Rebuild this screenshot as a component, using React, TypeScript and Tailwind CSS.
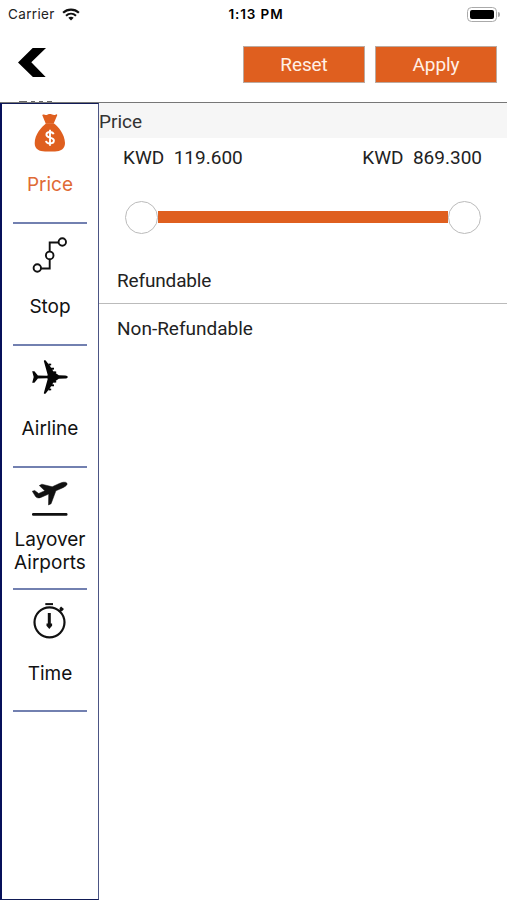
import React, { useState } from "react";

interface FilterTab {
  name: string;
  icon: React.ReactNode;
}

const MoneyBagIcon = () => (
  <svg width="34" height="38" viewBox="0 0 34 38">
    <path
      d="M9.4 1.6C9 .7 9.8.2 10.8.6c1.6.7 2.6.5 4-.1 1.500-.6 2.700-.6 4.200 0 1.500.6 2.600.7 4-.1.9-.4 1.500.2 1.100 1.200L20.600 9.800h-7.800L9.400 1.600z"
      fill="#df5f1f"
    />
    <path
      d="M13 9.600h8c4 3 10.800 10.500 11 19.400.1 6-4.500 8.400-10 8.400H12c-5.500 0-10.400-2.200-10.300-8.200C1.800 20.500 8.500 13 13 9.600z"
      fill="#df5f1f"
    />
    <path
      d="M20.600 20.300c-.4-1.600-1.800-2.300-3.600-2.300-2.100 0-3.600 1-3.600 2.700 0 4 7.500 1.800 7.500 5.900 0 1.800-1.700 2.900-3.900 2.900-2.200 0-3.700-.9-4-2.700M17 15.700v16"
      fill="none"
      stroke="#fff"
      strokeWidth="1.900"
    />
  </svg>
);

const StopIcon = () => (
  <svg width="36" height="38" viewBox="0 0 36 38" fill="none" stroke="#111" strokeWidth="1.900">
    <path d="M9 31.500h8.700V23M17.700 14.700V5.500H26" />
    <circle cx="5.300" cy="31" r="3.700" />
    <circle cx="17.700" cy="18.400" r="3.800" />
    <circle cx="30.300" cy="5" r="3.700" />
  </svg>
);

const AirlineIcon = () => (
  <svg width="36" height="36" viewBox="0 0 36 36">
    <g fill="#050505">
      <path d="M.2 12.200h2.200l3.500 4.300 9.200.2L19 13.800h4.200l3.600 2.400 6.400.2c1.500.1 2.600.9 2.600 1.600s-1.100 1.500-2.600 1.600l-6.400.2-3.600 2.400H19l-3.900-2.900-9.200.2-3.500 4.300H.2L1.700 18z" />
      <path d="M16 17L11.900 2.300C11.600 1 12.900.8 13.700 1.600L18 7l5.500 9v4L18 29l-4.300 5.400c-.8.8-2.100.6-1.800-.7L16 19z" />
      <path d="M16.600 4.600l2.600.1v1.600l-2.600.5zM19 8.700l3 .1v1.600l-3 .5zM21.300 12.300l2.900.1V14l-2.900.5zM16.600 31.400l2.600-.1v-1.600l-2.600-.5zM19 27.300l3-.1v-1.600l-3-.5zM21.300 23.700l2.900-.1V22l-2.900-.5z" />
    </g>
  </svg>
);

const LayoverIcon = () => (
  <svg width="36" height="37" viewBox="0 -1 36 37">
    <path
      d="M.3 9.200l2.400-.7 4 3 6.100-2.800L7.300 3.600l2.600-1.400 10.300 2.600L27.300 1.500c3-1.400 6.500-2 7.600-.3.900 1.500-1.200 3.200-4.500 4.700l-6.500 2.900-4.800 12.900-2.600 1.300.2-10.900-7.800 3.300c-2.300.9-4.200.6-5.300-.8z"
      fill="#111"
      stroke="#111"
      strokeWidth=".5"
    />
    <rect x="0" y="31" width="35.500" height="2.800" rx="1.200" fill="#111" />
  </svg>
);

const TimeIcon = () => (
  <svg width="36" height="39" viewBox="0 0 36 39" fill="none" stroke="#111">
    <path d="M13.300 1.100H21" strokeWidth="2" />
    <circle cx="17.500" cy="19.300" r="15" strokeWidth="2.200" />
    <path d="M27.200 8.800l2.700-3M28.200 4.500l2.900 2.500" strokeWidth="2.600" />
    <path d="M17.300 10v12" strokeWidth="3" />
    <path d="M14.500 20.500h5.600v2.300l-2.800 3.300-2.800-3.300z" fill="#111" stroke="none" />
  </svg>
);

const tabs: FilterTab[] = [
  { name: "Price", icon: <MoneyBagIcon /> },
  { name: "Stop", icon: <StopIcon /> },
  { name: "Airline", icon: <AirlineIcon /> },
  { name: "Layover Airports", icon: <LayoverIcon /> },
  { name: "Time", icon: <TimeIcon /> },
];

const StatusBar = () => (
  <div className="grid h-7 grid-cols-3 items-center pl-2 pr-[7px] font-['Inter',sans-serif] text-[13.5px] text-[#222]">
    <div className="flex items-center gap-[7px]">
      <span className="tracking-[0.35px]">Carrier</span>
      <svg width="18" height="13" viewBox="0 0 18 13">
        <path d="M1.100 4.700C5.600.5 12.400.5 16.900 4.700" fill="none" stroke="#111" strokeWidth="2.200" />
        <path d="M4 7.700c2.900-2.600 7.100-2.600 10 0" fill="none" stroke="#111" strokeWidth="2.100" />
        <path d="M6.300 9.800c1.600-1.300 3.800-1.300 5.400 0L9 12.500z" fill="#111" />
      </svg>
    </div>
    <span className="pl-1 text-center font-semibold tracking-[0.9px] text-black">1:13 PM</span>
    <div className="flex items-center justify-end gap-px">
      <div className="h-[15px] w-[30px] rounded-[4.500px] border border-[#aaa] p-[2px]">
        <div className="h-full rounded-[2px] bg-black" />
      </div>
      <div className="h-[5px] w-[2px] rounded-r-full bg-[#aaa]" />
    </div>
  </div>
);

const App: React.FC = () => {
  const [active, setActive] = useState("Price");

  return (
    <div className="flex h-[900px] w-[507px] flex-col overflow-hidden bg-white font-['Roboto',sans-serif] text-[#222]">
      <StatusBar />
      <header className="relative flex h-[75px] items-start justify-between border-b border-[#777] pl-[18px] pr-[10px] pt-[18px]">
        <button className="pt-[1px]" aria-label="Back">
          <svg width="28" height="31" viewBox="0 0 28 31">
            <path d="M14.700 1H28L13.300 15.200 27.700 30H14.900L0 15.500z" fill="#000" />
          </svg>
        </button>
        <div className="flex gap-[10px] text-[19px] text-[#fff0e6]">
          <button className="h-[37px] w-[122px] border border-[#bbaaa0] bg-[#df5f1f] pt-[2px] tracking-[-0.1px]">
            Reset
          </button>
          <button className="h-[37px] w-[122px] border border-[#bbaaa0] bg-[#df5f1f] pt-[2px] tracking-[-0.1px]">
            Apply
          </button>
        </div>
        {/* tips of the label scrolled under the header */}
        <div className="absolute bottom-0 left-[19px] flex gap-1">
          <span className="h-px w-2 bg-[#666]" />
          <span className="h-px w-1 bg-[#666]" />
          <span className="h-px w-1 bg-[#666]" />
          <span className="h-px w-[5px] bg-[#666]" />
        </div>
      </header>

      <div className="flex min-h-0 flex-1">
        <nav className="w-[99px] shrink-0 border border-l-2 border-[#4c5584] border-b-[#111b56] border-l-[#07105a] border-t-[#111b56] font-['Inter',sans-serif]">
          {tabs.map((tab) => (
            <button
              key={tab.name}
              onClick={() => setActive(tab.name)}
              className="ml-[11px] flex h-[122.200px] w-[74px] flex-col items-center border-b-2 border-[#7280b0] pt-[13px] first:h-[119.500px] first:pt-[10px]"
            >
              <span className="flex h-[43px] items-start">{tab.icon}</span>
              <span
                className={`flex h-[54px] w-[84px] items-center justify-center text-center text-[19px] leading-[23px] ${
                  active === tab.name ? "text-[#df6a35]" : "text-[#111]"
                }`}
              >
                {tab.name}
              </span>
            </button>
          ))}
        </nav>

        <main className="min-w-0 flex-1">
          <h1 className="flex h-[35px] items-center bg-[#f6f6f6] pt-[3px] text-[19px] text-[#333]">
            Price
          </h1>
          <div className="flex justify-between whitespace-pre pl-6 pr-[25px] pt-[6px] text-[19px] leading-7">
            <span>KWD  119.600</span>
            <span>KWD  869.300</span>
          </div>
          <div className="ml-[26px] mr-[26px] mt-[28px] flex h-[34px] items-center">
            <div className="size-[33px] shrink-0 rounded-full border border-[#bbb] bg-white" />
            <div className="h-[12px] flex-1 bg-[#df5f1f]" />
            <div className="size-[33px] shrink-0 rounded-full border border-[#bbb] bg-white" />
          </div>
          <div className="mt-[23px] flex h-[47px] items-center border-b border-[#bbb] pl-[18px] pt-[3px] text-[19px] tracking-[-0.15px]">
            Refundable
          </div>
          <div className="flex h-[49px] items-center pl-[18px] pt-[2px] text-[19px]">
            Non-Refundable
          </div>
        </main>
      </div>
    </div>
  );
};

export default App;
